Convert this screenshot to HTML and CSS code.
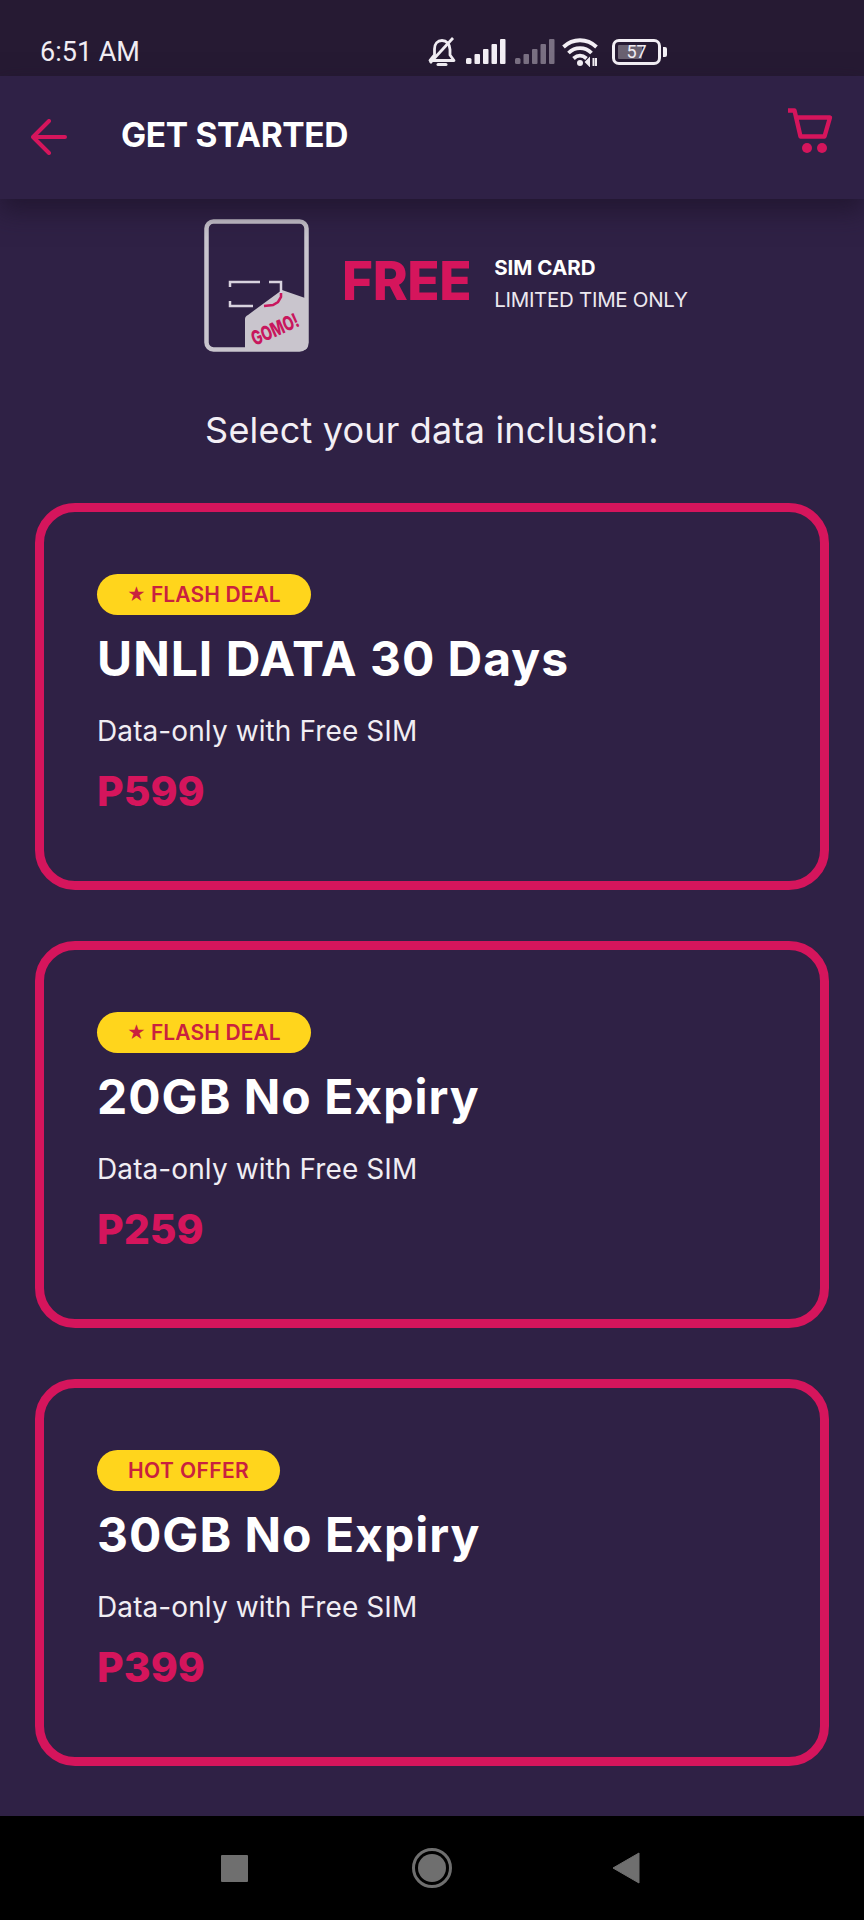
FILE: index.html
```html
<!DOCTYPE html>
<html lang="en">
<head>
<meta charset="utf-8">
<title>Get Started</title>
<link rel="stylesheet" href="styles.css">
</head>
<body>
<div class="phone">
  <div class="status">
    <span class="time">6:51 AM</span>
    <div class="status-icons">
      <svg class="ic-bell" width="30" height="30" viewBox="0 0 30 30" fill="none" stroke="#f1edf3" stroke-width="2.800">
        <path d="M3 23.500h24l-4-5.500V12.500C23 7 19.500 3.500 15 3.500 10.500 3.500 7.500 7 7.500 12v6z" stroke-linejoin="round"/>
        <path d="M11 27.500h8" stroke-linecap="round" stroke-width="3"/>
        <path d="M26 1 3 26" stroke-width="2.800"/>
      </svg>
      <svg class="ic-signal" width="40" height="26" viewBox="0 0 40 26" fill="#f3eff5">
        <rect x="0" y="19" width="5.500" height="6" rx="1.500"/><rect x="8.500" y="15" width="5.500" height="10" rx="1"/><rect x="17" y="10" width="5.500" height="15" rx="1"/><rect x="25.500" y="5" width="5.500" height="20" rx="1"/><rect x="34" y="0" width="5.500" height="25" rx="1"/>
      </svg>
      <svg class="ic-signal" width="40" height="26" viewBox="0 0 40 26" fill="#7a7083">
        <rect x="0" y="19" width="5.500" height="6" rx="1.500"/><rect x="8.500" y="15" width="5.500" height="10" rx="1"/><rect x="17" y="10" width="5.500" height="15" rx="1"/><rect x="25.500" y="5" width="5.500" height="20" rx="1"/><rect x="34" y="0" width="5.500" height="25" rx="1"/>
      </svg>
      <svg class="ic-wifi" width="38" height="30" viewBox="0 0 38 30" fill="none" stroke="#f3eff5" stroke-width="3.800">
        <path d="M1.500 10C11 1 25 1 34.500 10"/>
        <path d="M6.500 16C13 9.500 23 9.500 29.500 16"/>
        <path d="M11.500 21.500c4.500-4 8.500-4 13 0"/>
        <circle cx="18" cy="26" r="3" fill="#f3eff5" stroke="none"/>
        <path d="M27 22l-3 3 3 3zM31.500 21v8M34 21v8" fill="#f3eff5" stroke-width="2"/>
      </svg>
      <div class="battery">
        <div class="batt-body"><div class="batt-fill"></div><span class="batt-num">57</span></div>
        <div class="batt-nub"></div>
      </div>
    </div>
  </div>

  <header class="appbar">
    <svg class="back" width="36" height="36" viewBox="0 0 36 36" fill="none" stroke="#d5155c" stroke-width="4" stroke-linecap="round" stroke-linejoin="round">
      <path d="M34 18H3M18 2 2 18l16 16"/>
    </svg>
    <h1 class="appbar-title">GET STARTED</h1>
    <svg class="cart" width="46" height="46" viewBox="0 0 46 46" fill="none" stroke="#d5155c" stroke-width="4.400" stroke-linejoin="round">
      <path d="M1 2.500h6.500l6 26h24l5.500-19H9.500"/>
      <circle cx="20" cy="40" r="5" fill="#d5155c" stroke="none"/>
      <circle cx="35" cy="40" r="5" fill="#d5155c" stroke="none"/>
    </svg>
  </header>

  <main class="content">
    <section class="promo">
      <svg class="sim" width="106" height="134" viewBox="0 0 106 134">
        <rect x="2.500" y="2.500" width="100" height="128" rx="7" fill="none" stroke="#c9c5cd" stroke-width="4.500"/>
        <path d="M41 131V100c0-2 1-3 3-4L78 71l26 9v46c0 3-2 5-5 5z" fill="#c9c5cd"/>
        <path d="M26 68v-5h30M65 63h12v11M49 87H26v-5" fill="none" stroke="#d8d2de" stroke-width="2.500"/>
        <path d="M77 74v4l-3 5-5 3-9 1" fill="none" stroke="#c8175d" stroke-width="2.500"/>
        <text class="sim-text" x="51" y="127" textLength="50" lengthAdjust="spacingAndGlyphs" transform="rotate(-24 51 127)">GOMO!</text>
      </svg>
      <span class="free">FREE</span>
      <div class="promo-copy">
        <strong class="promo-a">SIM CARD</strong>
        <span class="promo-b">LIMITED TIME ONLY</span>
      </div>
    </section>

    <h2 class="select">Select your data inclusion:</h2>

    <div class="cards">
      <article class="card">
        <span class="badge"><span class="star">★</span> FLASH DEAL</span>
        <h3 class="plan">UNLI DATA 30 Days</h3>
        <p class="desc">Data-only with Free SIM</p>
        <p class="price">P599</p>
      </article>
      <article class="card">
        <span class="badge"><span class="star">★</span> FLASH DEAL</span>
        <h3 class="plan">20GB No Expiry</h3>
        <p class="desc">Data-only with Free SIM</p>
        <p class="price">P259</p>
      </article>
      <article class="card">
        <span class="badge badge-hot">HOT OFFER</span>
        <h3 class="plan">30GB No Expiry</h3>
        <p class="desc">Data-only with Free SIM</p>
        <p class="price">P399</p>
      </article>
    </div>
  </main>

  <nav class="navbar">
    <div class="nav-square"></div>
    <div class="nav-circle"><div class="nav-dot"></div></div>
    <svg class="nav-back" width="28" height="32" viewBox="0 0 28 32"><path d="M1 16 27 1v30z" fill="#6f6f6f" stroke="#6f6f6f" stroke-width="1" stroke-linejoin="round"/></svg>
  </nav>
</div>
</body>
</html>
```
FILE: styles.css
```css
* { box-sizing: border-box; margin: 0; padding: 0; }
html, body { background: #2f2145; }
body { width: 864px; height: 1920px; overflow: hidden; font-family: "Inter", "Liberation Sans", sans-serif; }
.phone { width: 864px; height: 1920px; display: flex; flex-direction: column; }

.status { height: 76px; background: #261a33; display: flex; align-items: center; padding: 27px 0 0 40px; flex: none; position: relative; z-index: 1; }
.time { font-family: "Roboto", sans-serif; font-size: 27px; color: #f1edf3; width: 387px; }
.status-icons { display: flex; align-items: center; gap: 9px; }
.ic-wifi { margin-left: -2px; }
.battery { display: flex; align-items: center; gap: 2px; margin-left: 3px; }
.batt-body { width: 49px; height: 26px; border: 3px solid #f3eff5; border-radius: 7px; position: relative; padding: 3px; }
.batt-fill { width: 24px; height: 14px; background: #6a6171; border-radius: 1px; }
.batt-num { position: absolute; inset: 0; display: flex; align-items: center; justify-content: center; font-family: "Roboto", sans-serif; font-size: 18px; color: #f1edf3; }
.batt-nub { width: 4px; height: 10px; background: #f3eff5; border-radius: 0 2px 2px 0; }

.appbar { height: 123px; flex: none; background: #2f2146; display: flex; align-items: center; padding: 0 31px; box-shadow: 0 12px 24px rgba(28, 18, 42, .7); position: relative; z-index: 1; }
.back { margin-top: -1px; }
.appbar-title { font-size: 33.500px; font-weight: 700; color: #fff; margin-left: 54px; flex: 1; letter-spacing: -.35px; margin-top: -5px; }
.cart { margin-top: -14px; }

.content { flex: 1; min-height: 0; padding: 20px 35px 0; display: flex; flex-direction: column; background: #2f2145; }
.promo { display: flex; align-items: center; padding-left: 169px; }
.sim { flex: none; overflow: visible; }
.sim-text { font-family: "Inter", sans-serif; font-weight: 800; font-size: 20px; fill: #c8175d; }
.free { font-size: 53px; font-weight: 800; color: #d5155c; margin-left: 32px; margin-top: -10px; letter-spacing: -.4px; }
.promo-copy { display: flex; flex-direction: column; margin-left: 23px; margin-top: -5px; color: #fff; gap: 8px; }
.promo-a { font-size: 20.500px; font-weight: 700; line-height: 24px; }
.promo-b { font-size: 20.500px; font-weight: 400; line-height: 24px; color: #ece8ef; letter-spacing: -.3px; }
.select { font-size: 36px; font-weight: 400; color: #f3eff5; text-align: center; margin-top: 55px; line-height: 44px; letter-spacing: .2px; }

.cards { display: flex; flex-direction: column; gap: 51px; margin-top: 51px; }
.card { height: 387px; border: 9px solid #d5155c; border-radius: 40px; padding: 62px 53px 0; background: #2f2145; }
.badge { display: inline-flex; align-items: center; justify-content: center; height: 41px; padding: 0 30px; background: #ffd51c; border-radius: 21px; color: #c9213f; font-size: 21px; font-weight: 600; letter-spacing: .1px; }
.badge-hot { padding: 0 31px; letter-spacing: .4px; }
.star { margin-right: 5px; font-size: 18px; }
.plan { font-size: 48px; font-weight: 700; color: #fff; margin-top: 16px; line-height: 56px; letter-spacing: 1px; }
.desc { font-size: 28px; color: #f1edf3; margin-top: 27px; line-height: 34px; letter-spacing: .1px; }
.price { font-size: 41px; font-weight: 800; color: #d5155c; margin-top: 18px; line-height: 50px; }

.navbar { height: 104px; flex: none; background: #000; display: flex; align-items: center; justify-content: space-between; padding: 0 224px 0 221px; }
.nav-square { width: 27px; height: 27px; margin-right: 4px; background: #6f6f6f; border-radius: 1px; }
.nav-circle { width: 40px; height: 40px; border: 3px solid #6f6f6f; border-radius: 50%; display: flex; align-items: center; justify-content: center; }
.nav-dot { width: 28px; height: 28px; background: #6f6f6f; border-radius: 50%; }
```
